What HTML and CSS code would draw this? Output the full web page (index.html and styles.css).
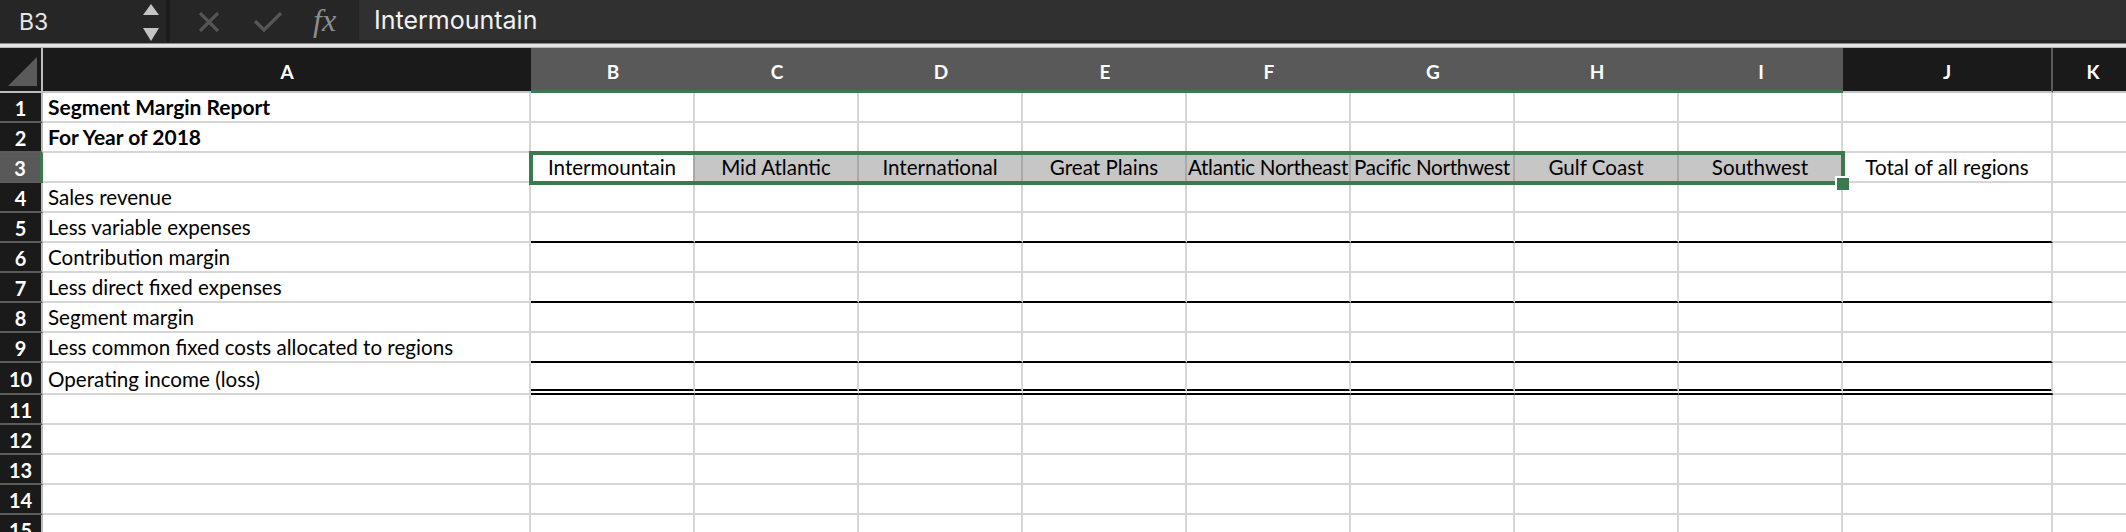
FILE: index.html
```html
<!DOCTYPE html>
<html>
<head>
<meta charset="utf-8">
<link rel="stylesheet" href="styles.css">
</head>
<body>
<div class="fbar">
  <div class="namebox">
    <span class="name">B3</span>
    <svg class="spin" width="16" height="40" viewBox="0 0 16 40"><polygon points="0,13 8,2 16,13" fill="#c4c4c4"/><polygon points="0,26 16,26 8,39" fill="#c4c4c4"/></svg>
  </div>
  <div class="tools">
    <svg class="ico-x" width="22" height="20" viewBox="0 0 22 20"><path d="M2 1 L20 19 M20 1 L2 19" stroke="#555" stroke-width="3.2" fill="none"/></svg>
    <svg class="ico-ok" width="28" height="20" viewBox="0 0 28 20"><path d="M1 9 L10 18 L27 1" stroke="#555" stroke-width="3.4" fill="none"/></svg>
    <span class="fx">fx</span>
  </div>
  <div class="finput">Intermountain</div>
</div>
<div class="fsep"></div>
<div class="sheet">
  <div class="hrow">
    <div class="corner"><svg width="30" height="30" viewBox="0 0 30 30"><polygon points="29,0 29,29 0,29" fill="#5a5a5a"/></svg></div>
    <div class="ch">A</div>
    <div class="ch sel">B</div>
    <div class="ch sel">C</div>
    <div class="ch sel">D</div>
    <div class="ch sel">E</div>
    <div class="ch sel">F</div>
    <div class="ch sel">G</div>
    <div class="ch sel">H</div>
    <div class="ch sel">I</div>
    <div class="ch jh">J</div>
    <div class="ch">K</div>
  </div>

  <div class="row"><div class="rh">1</div><div class="c a bold">Segment Margin Report</div><div class="c"></div><div class="c"></div><div class="c"></div><div class="c"></div><div class="c"></div><div class="c"></div><div class="c"></div><div class="c"></div><div class="c"></div><div class="c"></div></div>
  <div class="row"><div class="rh">2</div><div class="c a bold">For Year of 2018</div><div class="c"></div><div class="c"></div><div class="c"></div><div class="c"></div><div class="c"></div><div class="c"></div><div class="c"></div><div class="c"></div><div class="c"></div><div class="c"></div></div>
  <div class="row r3">
    <div class="rh rsel">3</div><div class="c a"></div>
    <div class="c ctr s0">Intermountain</div>
    <div class="c ctr s">Mid Atlantic</div>
    <div class="c ctr s">International</div>
    <div class="c ctr s">Great Plains</div>
    <div class="c ctr s tight">Atlantic Northeast</div>
    <div class="c ctr s tight">Pacific Northwest</div>
    <div class="c ctr s">Gulf Coast</div>
    <div class="c ctr s">Southwest</div>
    <div class="c ctr">Total of all regions</div>
    <div class="c"></div>
    <div class="selbox"><div class="handle"></div></div>
  </div>
  <div class="row"><div class="rh">4</div><div class="c a">Sales revenue</div><div class="c"></div><div class="c"></div><div class="c"></div><div class="c"></div><div class="c"></div><div class="c"></div><div class="c"></div><div class="c"></div><div class="c"></div><div class="c"></div></div>
  <div class="row"><div class="rh">5</div><div class="c a">Less variable expenses</div><div class="c rl"></div><div class="c rl"></div><div class="c rl"></div><div class="c rl"></div><div class="c rl"></div><div class="c rl"></div><div class="c rl"></div><div class="c rl"></div><div class="c rl"></div><div class="c"></div></div>
  <div class="row"><div class="rh">6</div><div class="c a">Contribution margin</div><div class="c"></div><div class="c"></div><div class="c"></div><div class="c"></div><div class="c"></div><div class="c"></div><div class="c"></div><div class="c"></div><div class="c"></div><div class="c"></div></div>
  <div class="row"><div class="rh">7</div><div class="c a">Less direct fixed expenses</div><div class="c rl"></div><div class="c rl"></div><div class="c rl"></div><div class="c rl"></div><div class="c rl"></div><div class="c rl"></div><div class="c rl"></div><div class="c rl"></div><div class="c rl"></div><div class="c"></div></div>
  <div class="row"><div class="rh">8</div><div class="c a">Segment margin</div><div class="c"></div><div class="c"></div><div class="c"></div><div class="c"></div><div class="c"></div><div class="c"></div><div class="c"></div><div class="c"></div><div class="c"></div><div class="c"></div></div>
  <div class="row"><div class="rh">9</div><div class="c a">Less common fixed costs allocated to regions</div><div class="c rl"></div><div class="c rl"></div><div class="c rl"></div><div class="c rl"></div><div class="c rl"></div><div class="c rl"></div><div class="c rl"></div><div class="c rl"></div><div class="c rl"></div><div class="c"></div></div>
  <div class="row r10"><div class="rh">10</div><div class="c a">Operating income (loss)</div><div class="c dbl"></div><div class="c dbl"></div><div class="c dbl"></div><div class="c dbl"></div><div class="c dbl"></div><div class="c dbl"></div><div class="c dbl"></div><div class="c dbl"></div><div class="c dbl"></div><div class="c"></div></div>
  <div class="row"><div class="rh">11</div><div class="c a"></div><div class="c"></div><div class="c"></div><div class="c"></div><div class="c"></div><div class="c"></div><div class="c"></div><div class="c"></div><div class="c"></div><div class="c"></div><div class="c"></div></div>
  <div class="row"><div class="rh">12</div><div class="c a"></div><div class="c"></div><div class="c"></div><div class="c"></div><div class="c"></div><div class="c"></div><div class="c"></div><div class="c"></div><div class="c"></div><div class="c"></div><div class="c"></div></div>
  <div class="row"><div class="rh">13</div><div class="c a"></div><div class="c"></div><div class="c"></div><div class="c"></div><div class="c"></div><div class="c"></div><div class="c"></div><div class="c"></div><div class="c"></div><div class="c"></div><div class="c"></div></div>
  <div class="row"><div class="rh">14</div><div class="c a"></div><div class="c"></div><div class="c"></div><div class="c"></div><div class="c"></div><div class="c"></div><div class="c"></div><div class="c"></div><div class="c"></div><div class="c"></div><div class="c"></div></div>
  <div class="row"><div class="rh">15</div><div class="c a"></div><div class="c"></div><div class="c"></div><div class="c"></div><div class="c"></div><div class="c"></div><div class="c"></div><div class="c"></div><div class="c"></div><div class="c"></div><div class="c"></div></div>
</div>
</body>
</html>
```
FILE: styles.css
```css
* { box-sizing: border-box; margin: 0; padding: 0; }
html, body { width: 2126px; height: 532px; overflow: hidden; background: #fff; }
body { font-family: Lato, "Liberation Sans", sans-serif; }

/* formula bar */
.fbar { height: 43px; background: #262626; display: flex; align-items: flex-start; }
.namebox { width: 170px; height: 43px; display: flex; align-items: center; padding-left: 19px; padding-right: 7px; border-right: 4px solid #1d1d1d; color: #e6e6e6; font-family: Inter, "Liberation Sans", sans-serif; font-size: 23px; }
.namebox .name { flex: 1; }
.spin { display: block; }
.tools { width: 189px; height: 43px; display: flex; align-items: center; padding-left: 28px; }
.ico-x { display: block; margin-right: 34px; }
.ico-ok { display: block; margin-right: 31px; }
.fx { font-family: "Liberation Serif", serif; font-style: italic; font-size: 32px; color: #8e8e8e; line-height: 1; margin-top: -4px; }
.finput { flex: 1; height: 40px; background: #303030; color: #f2f2f2; font-family: Inter, "Liberation Sans", sans-serif; font-size: 25px; display: flex; align-items: center; padding-left: 15px; }
.fsep { height: 5px; background: #e6e6e6; border-top: 1px solid #8c8c8c; border-bottom: 1px solid #b5b5b5; }

/* sheet */
.sheet { display: flex; flex-direction: column; }
.hrow, .row { display: grid; grid-template-columns: 43px 488px repeat(8, 164px) 210px 80px; }
.hrow { height: 45px; }
.row { height: 30px; position: relative; }
.row.r3 { z-index: 2; }
.row.r10 { height: 32px; }

.corner { background: #1a1a1a; border-right: 2px solid #bdbdbd; border-bottom: 2px solid #bdbdbd; display: flex; align-items: flex-end; justify-content: flex-start; padding: 0 0 4px 8px; }
.corner svg { display: block; }
.ch { background: #1a1a1a; color: #fff; font-weight: 700; font-size: 19px; display: flex; align-items: center; justify-content: center; border-bottom: 2px solid #c4c4c4; padding-top: 4px; }
.ch.sel { background: #595959; border-bottom: 3px solid #3b7a4f; }
.ch.jh { border-right: 2px solid #5a5a5a; }

.rh { background: #1a1a1a; color: #fff; font-weight: 700; font-size: 20px; display: flex; align-items: center; justify-content: center; border-right: 2px solid #bdbdbd; border-bottom: 2px solid #5c5c5c; padding-top: 2px; }
.rh.rsel { background: #595959; border-right: 3px solid #3b7a4f; }

.c { border-right: 2px solid #d6d6d6; border-bottom: 2px solid #d6d6d6; font-size: 20.6px; color: #000; white-space: nowrap; overflow: hidden; display: flex; align-items: flex-end; padding-bottom: 2px; }
.c.a { padding-left: 5px; }
.c.bold { font-weight: 700; font-size: 21px; }
.c.ctr { justify-content: center; }
.c.tight { letter-spacing: -0.3px; }
.c.s0 { border-right-color: #a9a9a9; }
.c.s { background: #c6c6c6; border-right-color: #a9a9a9; }
.c.rl { border-bottom-color: #000; }
.c.dbl { border-bottom: 6px double #000; }

.selbox { position: absolute; left: 529px; top: -2px; width: 1316px; height: 34px; border: 4px solid #3b7a4f; pointer-events: none; }
.handle { position: absolute; right: -8px; bottom: -9px; width: 14px; height: 14px; background: #3b7a4f; border: 2px solid #fff; border-right: none; border-bottom: none; }
```
